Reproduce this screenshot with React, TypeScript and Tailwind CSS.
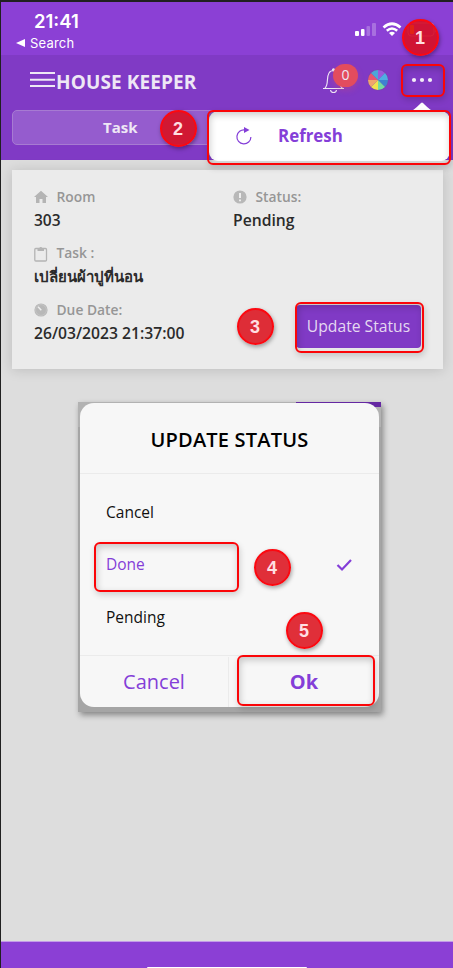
import React from "react";

const RED = "border-2 border-[#fb0508]";

function Badge({ n, place }: { n: number; place: string }) {
  return (
    <div
      className={`absolute z-30 flex h-[37px] w-[37px] items-center justify-center rounded-full border-2 border-[#fc0810] bg-[#dc0c18]/85 pr-px font-['Liberation_Sans',sans-serif] text-[18px] leading-none font-bold text-[#ffdfe2] shadow-[1px_2px_4px_rgba(0,0,0,0.35)] ${place}`}
    >
      {n}
    </div>
  );
}

function Outline({ place }: { place: string }) {
  return (
    <div
      className={`pointer-events-none absolute z-20 rounded-[6px] ${RED} shadow-[1px_3px_6px_rgba(0,0,0,0.16),inset_1px_3px_7px_rgba(0,0,0,0.2)] ${place}`}
    />
  );
}

function StatusBar() {
  return (
    <div className="flex h-[53px] items-start justify-between bg-[#8b40d5] text-white">
      <div className="flex flex-col">
        <div className="mt-[8px] ml-[33px] h-[22px] font-['Inter',sans-serif] text-[18.500px] leading-[22px] font-semibold whitespace-nowrap">21:41</div>
        <div className="mt-[3px] ml-[15px] flex h-[16px] items-center gap-[5px] font-['Inter',sans-serif] text-[13px] leading-[16px] tracking-[0.2px]">
          <svg width="9" height="8" viewBox="0 0 9 8"><path d="M0 4 9 0v8z" fill="white" /></svg>
          Search
        </div>
      </div>
      <div className="mt-[20px] mr-[16px] flex items-start">
        <svg width="22" height="15" viewBox="0 0 22 15" fill="white">
          <rect x="0" y="9" width="4" height="5" rx="1" />
          <rect x="6" y="7" width="3.500" height="7" rx="1" />
          <rect x="11.500" y="4" width="3.500" height="10" rx="1" opacity=".25" />
          <rect x="17" y="1" width="4" height="13" rx="1" opacity=".25" />
        </svg>
        <svg className="ml-[5px]" width="20" height="15" viewBox="0 0 20 15" fill="none" stroke="white">
          <path d="M1.500 5.500Q10-2 18.500 5.500" strokeWidth="2.700" />
          <path d="M4.800 8.800Q10 4.300 15.200 8.800" strokeWidth="2.500" />
          <path d="m7 11 3 3 3-3Q10 8.500 7 11Z" fill="white" stroke="none" />
        </svg>
        <svg className="ml-[5px]" width="30" height="15" viewBox="0 0 30 15">
          <rect x="1" y="1" width="26" height="13" rx="3.500" fill="none" stroke="white" opacity=".4" />
          <rect x="3" y="3" width="4" height="9" rx="1" fill="#ffb000" />
          <path d="M28.500 5v5" stroke="white" opacity=".4" />
        </svg>
      </div>
    </div>
  );
}

function Header() {
  return (
    <header className="h-[105px] bg-[#803ac5] text-[#eee7f5]">
      <div className="flex h-[53px] items-center">
        <svg className="mb-[6px] ml-[28px] shrink-0" width="26" height="18" viewBox="0 0 26 18">
          <path d="M1 3h25M1 9.700h25M1 16h25" stroke="#eee7f5" strokeWidth="1.900" />
        </svg>
        <h1 className="w-[144px] pl-px text-[19px] leading-[26px] font-bold tracking-[0.120px] whitespace-nowrap">HOUSE KEEPER</h1>
        <div className="relative mb-[5px] ml-[123px] h-[27px] w-[36px]">
          <svg width="24" height="27" viewBox="0 0 24 27" fill="none" stroke="#eee7f5" strokeWidth="1.150">
            <path d="M1 22.500h21M3 22c4-4 1-10 4-15 1-2 3-2.500 5-2.500 7 0 5 10 6 14 .4 1.800 2 3 2 3.500M8.500 24c.6 3.500 5.500 3.500 6 0" />
            <circle cx="11.500" cy="3.800" r="1" fill="#eee7f5" />
          </svg>
          <div className="absolute top-[-2px] left-[11px] flex h-[23px] w-[25px] items-center justify-center rounded-full bg-[#e34c5e] text-[14px] leading-none shadow-[0_3px_6px_rgba(227,76,94,0.3)]">0</div>
        </div>
        <svg className="mb-[4px] ml-[9px]" width="22" height="22" viewBox="0 0 22 22">
          <circle cx="11" cy="11" r="10.500" fill="#70538d" opacity=".5" />
          <path d="M11 11V1a10 10 0 0 1 7 3z" fill="#9d58dc" />
          <path d="m11 11 7-7a10 10 0 0 1 3 7z" fill="#50aee2" />
          <path d="M11 11h10a10 10 0 0 1-3 7z" fill="#3e82d0" />
          <path d="m11 11 7 7a10 10 0 0 1-7 3z" fill="#72dda0" />
          <path d="M11 11v10a10 10 0 0 1-7-3z" fill="#f0e34e" />
          <path d="m11 11-7 7a10 10 0 0 1-3-7z" fill="#efa66d" />
          <path d="M11 11H1a10 10 0 0 1 3-7z" fill="#e9556f" />
          <path d="M11 11 4 4a10 10 0 0 1 7-3z" fill="#4da7d8" />
        </svg>
        <svg className="mb-[4px] ml-[22px]" width="22" height="6" viewBox="0 0 22 6" fill="#f3edf7">
          <circle cx="3" cy="3" r="2.100" /><circle cx="11" cy="3" r="2.100" /><circle cx="19" cy="3" r="2.100" />
        </svg>
      </div>
      <div className="mt-[2px] mr-[10px] ml-[11px] flex h-[35px] rounded-[5px] border border-[#a77bd2] bg-[#955cce]">
        <div className="flex w-1/2 items-center justify-center text-[15px] font-bold">Task</div>
      </div>
    </header>
  );
}

function Field({ icon, label, value, valueClass = "text-[15.500px]" }: { icon: React.ReactNode; label: string; value: string; valueClass?: string }) {
  return (
    <div className="h-[56.500px]">
      <div className="flex h-[20px] items-center">
        <div className="mt-px flex w-[22.500px]">{icon}</div>
        <span className="text-[13.800px] leading-[20px] font-semibold text-[#969696]">{label}</span>
      </div>
      <div className={`mt-[2px] leading-[22px] font-semibold whitespace-nowrap text-[#2b2b2b] ${valueClass}`}>{value}</div>
    </div>
  );
}

function TaskCard() {
  return (
    <section className="mt-[10px] mr-[10px] ml-[11px] flex h-[199px] bg-[#ebebeb] pt-[16.500px] pl-[22px] shadow-[0_1px_12px_rgba(0,0,0,0.15)]">
      <div className="w-[199px]">
        <Field
          label="Room"
          value="303"
          icon={<svg width="14" height="14" viewBox="0 0 14 14"><path d="m7 .8 7 6.300h-2V13H8.500V9h-3v4H2V7.100H0z" fill="#b4b4b4" /></svg>}
        />
        <Field
          label="Task :"
          value="เปลี่ยนผ้าปูที่นอน"
          valueClass="text-[15px]"
          icon={<svg width="14" height="16" viewBox="0 0 14 16"><rect x=".8" y="2.500" width="11.700" height="12.500" rx="1" fill="none" stroke="#b4b4b4" strokeWidth="1.300" /><path d="M3.500 2h1.800a1.700 1.700 0 0 1 3 0H10v3H3.500z" fill="#b4b4b4" /></svg>}
        />
        <Field
          label="Due Date:"
          value="26/03/2023 21:37:00"
          valueClass="text-[15.700px]"
          icon={<svg width="14" height="14" viewBox="0 0 14 14"><circle cx="7" cy="7" r="6.600" fill="#b8b8b8" /><circle cx="7" cy="7" r="5.400" fill="none" stroke="#cecece" strokeWidth=".5" /><path d="m4 3.800 3.300 3.400" stroke="#eee" strokeWidth="1.500" /></svg>}
        />
      </div>
      <div className="flex flex-col">
        <Field
          label="Status:"
          value="Pending"
          valueClass="text-[15.700px]"
          icon={<svg width="14" height="14" viewBox="0 0 14 14"><circle cx="7" cy="7" r="6.600" fill="#b8b8b8" /><path d="M7 3v5M7 9.500v1.800" stroke="#f4f4f4" strokeWidth="1.800" /></svg>}
        />
        <button className="mt-[62px] ml-[63px] h-[43px] w-[125px] rounded-[4px] bg-[#803ac5] text-[15.700px] whitespace-nowrap text-[#e5d8f1]">Update Status</button>
      </div>
    </section>
  );
}

function Dialog() {
  return (
    <section className="relative mt-[33px] ml-[77px] h-[310px] w-[303px] bg-[#a5a5a5] shadow-[2px_3px_6px_rgba(0,0,0,0.4)]">
      <div className="absolute top-0 left-0 h-[25px] w-full bg-[#b2b2b2]" />
      <div className="absolute top-0 right-0 h-[5px] w-[85px] bg-[#6528a2]" />
      <div className="relative top-px ml-[2px] flex h-[304px] w-[299px] flex-col overflow-hidden rounded-[14px] bg-[#f7f7f7]">
        <h2 className="flex h-[71px] shrink-0 items-center justify-center border-b border-[#ebebeb] pt-[3px] text-[20px] font-semibold tracking-[0.200px] text-black">UPDATE STATUS</h2>
        <div className="flex h-[181px] shrink-0 flex-col pt-[12px] text-[15.500px] text-[#111]">
          <div className="flex h-[53px] items-center pl-[26px]">Cancel</div>
          <div className="flex h-[52px] items-center justify-between pr-[26px] pl-[26px] text-[#843ed8]">
            Done
            <svg width="17" height="14" viewBox="0 0 17 14"><path d="m1.500 7 4.500 4.500L15 2" fill="none" stroke="#843ed8" strokeWidth="2.200" /></svg>
          </div>
          <div className="flex h-[53px] items-center pl-[26px]">Pending</div>
        </div>
        <div className="flex h-[52px] border-t border-[#ebebeb] pt-px text-[20px] text-[#843ed8]">
          <div className="flex w-[149px] items-center justify-center border-r border-[#ebebeb]">Cancel</div>
          <div className="flex flex-1 items-center justify-center font-bold">Ok</div>
        </div>
      </div>
    </section>
  );
}

export default function App() {
  return (
    <div className="relative flex h-[968px] w-[453px] flex-col overflow-hidden border-t-2 border-l border-[#202020] bg-[#dddddd] font-['Open_Sans','Noto_Sans',sans-serif]">
      <StatusBar />
      <Header />
      <main className="flex-1">
        <TaskCard />
        <Dialog />
      </main>
      <footer className="flex h-[27px] items-end justify-center border-t border-[#c49be9] bg-[#8b3fd5]">
        <div className="h-[1px] w-[160px] rounded-t bg-white" />
      </footer>

      <svg className="absolute top-[98px] left-[410px] z-10" width="22" height="11" viewBox="0 0 22 11"><path d="M0 11Q3 10 9 4q2-3 4 0 6 6 9 7z" fill="white" /></svg>
      <div className="absolute top-[109px] left-[208px] z-10 flex h-[50px] w-[241px] items-center rounded-[9px] bg-white pl-[25px] text-[#843ed8]">
        <svg width="20" height="20" viewBox="0 0 20 20"><path d="M11 4a7 7 0 1 0 5.900 7" fill="none" stroke="#843ed8" strokeWidth="1.200" /><path d="m10 1 5.500 3-5.500 3z" fill="#843ed8" /></svg>
        <span className="ml-[24px] text-[16.900px] font-bold">Refresh</span>
      </div>

      <Outline place="top-[62px] left-[400px] h-[33px] w-[44px]" />
      <Outline place="top-[108px] left-[206px] h-[55px] w-[244px]" />
      <Outline place="top-[300px] left-[294px] h-[51px] w-[129px]" />
      <Outline place="top-[540px] left-[93px] h-[50px] w-[145px]" />
      <Outline place="top-[653px] left-[236px] h-[51px] w-[138px]" />
      <Badge n={1} place="top-[17px] left-[401px]" />
      <Badge n={2} place="top-[108px] left-[159px]" />
      <Badge n={3} place="top-[306px] left-[236px]" />
      <Badge n={4} place="top-[547px] left-[253px]" />
      <Badge n={5} place="top-[610px] left-[285px]" />
    </div>
  );
}
